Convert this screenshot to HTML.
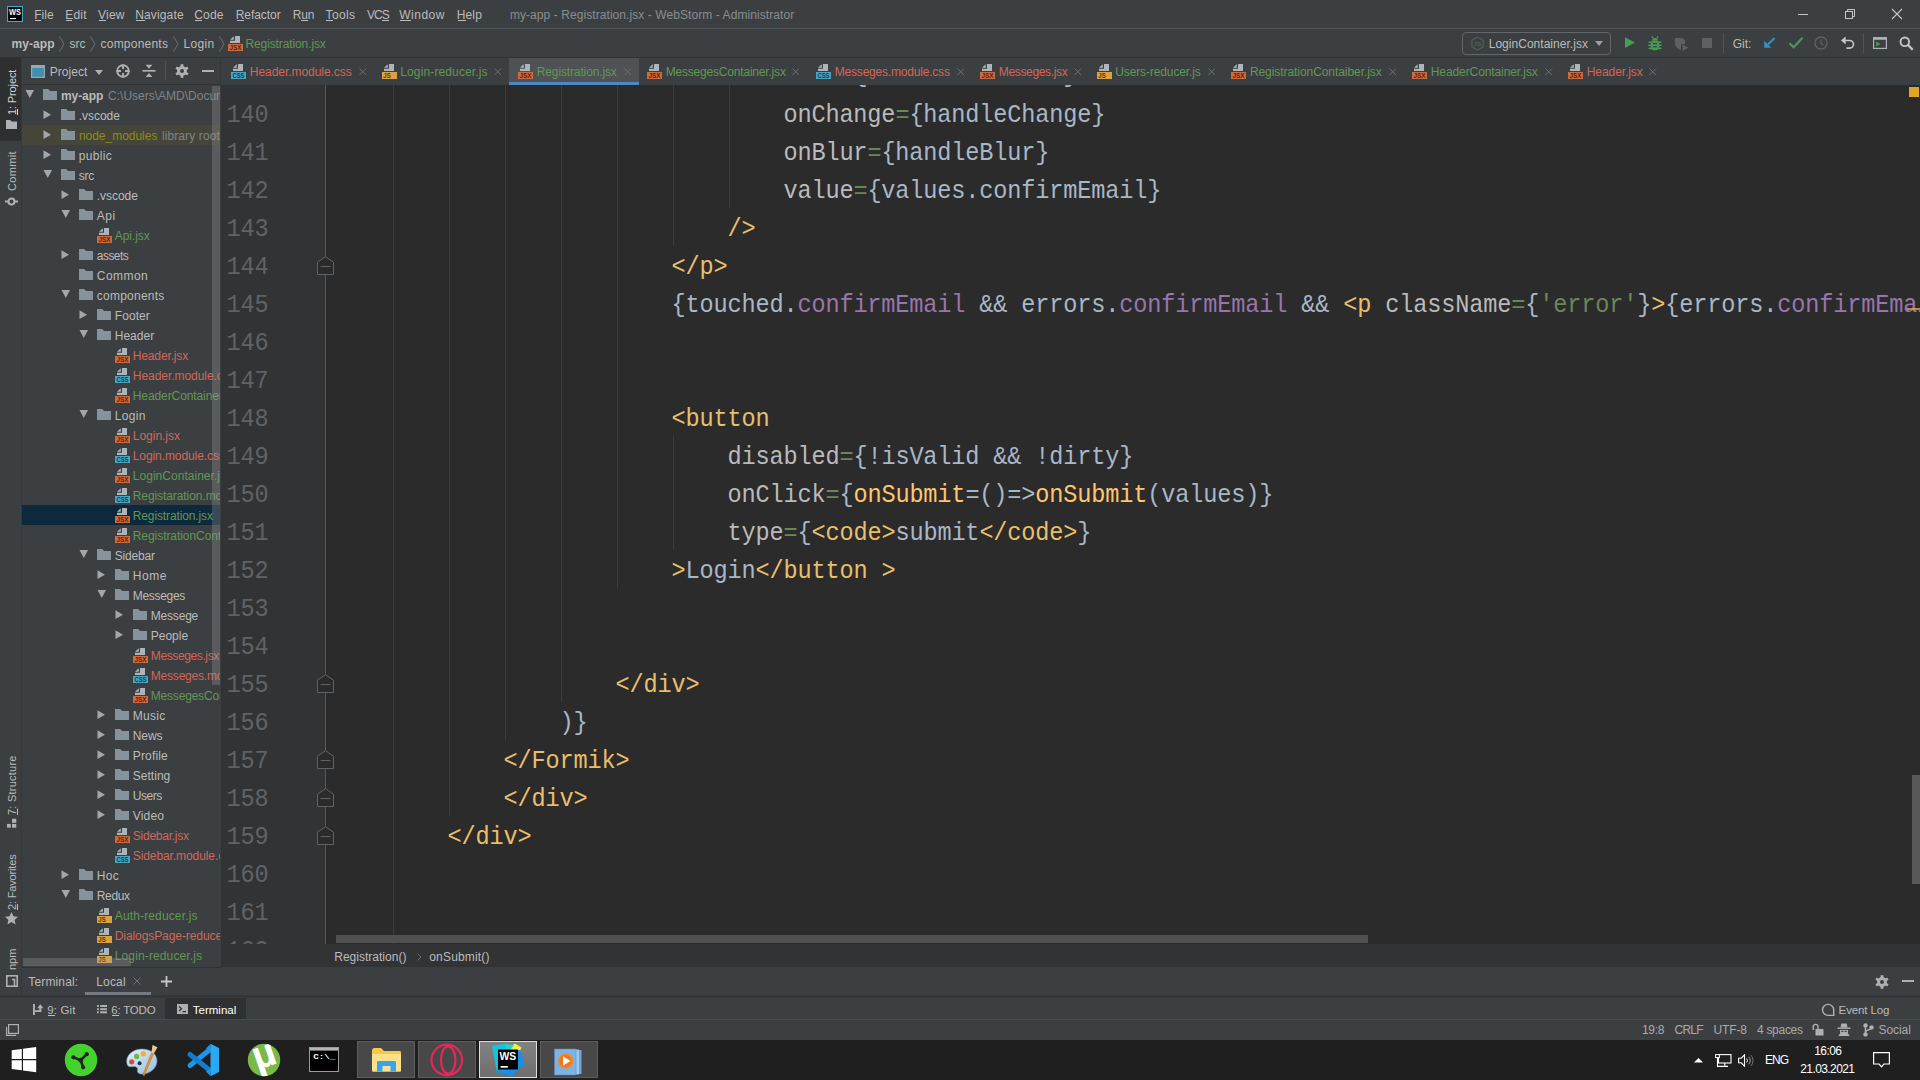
<!DOCTYPE html>
<html lang="en"><head><meta charset="utf-8"><title>my-app - Registration.jsx - WebStorm</title>
<style>
html,body{margin:0;padding:0;background:#2b2b2b;}
body{width:1920px;height:1080px;overflow:hidden;font-family:"Liberation Sans",sans-serif;font-size:12px;}
#root{position:relative;width:1920px;height:1080px;overflow:hidden;background:#3c3f41;}
#root>div,#root>svg,#root>span{position:absolute;}
.t{white-space:pre;line-height:1;display:block;}
.clip{position:absolute;overflow:hidden;}
.clip>div,.clip>svg,.clip>span{position:absolute;}
.ln{position:absolute;transform-origin:0 50%;left:0;height:38px;line-height:38px;white-space:pre;font-family:"Liberation Mono",monospace;color:#a9b7c6;}
.num{position:absolute;transform-origin:0 50%;font-family:"Liberation Mono",monospace;color:#606366;white-space:pre;line-height:38px;height:38px;}
.k{color:#e8bf6a}.a{color:#bababa}.g{color:#6a8759}.p{color:#9876aa}.f{color:#ffc66d}

</style></head>
<body>
<div id="root">
<div style="left:0px;top:0px;width:1920px;height:29px;background:#3c3f41;"></div>
<div style="left:0px;top:28px;width:1920px;height:1px;background:#515456;"></div>
<svg style="left:7px;top:6px;" width="16" height="16" viewBox="0 0 16 16"><rect width="16" height="16" fill="#45a9cc"/><rect x="1.100" y="1.100" width="13.800" height="13.800" fill="#000"/><text x="2.100" y="9" font-family="Liberation Sans, sans-serif" font-weight="700" font-size="8.400" fill="#fff" textLength="12" lengthAdjust="spacingAndGlyphs">WS</text><rect x="3" y="12" width="6" height="1.100" fill="#fff"/></svg>
<span class="t " style="left:34.28px;top:9.00px;color:#bbbbbb;letter-spacing:0.024px;">File</span>
<span class="t " style="left:65.28px;top:9.00px;color:#bbbbbb;letter-spacing:0.188px;">Edit</span>
<span class="t " style="left:98.03px;top:9.00px;color:#bbbbbb;letter-spacing:0.223px;">View</span>
<span class="t " style="left:135.28px;top:9.00px;color:#bbbbbb;letter-spacing:0.133px;">Navigate</span>
<span class="t " style="left:194.28px;top:9.00px;color:#bbbbbb;letter-spacing:0.188px;">Code</span>
<span class="t " style="left:235.68px;top:9.00px;color:#bbbbbb;letter-spacing:-0.040px;">Refactor</span>
<span class="t " style="left:292.68px;top:9.00px;color:#bbbbbb;letter-spacing:-0.075px;">Run</span>
<span class="t " style="left:325.53px;top:9.00px;color:#bbbbbb;letter-spacing:0.375px;">Tools</span>
<span class="t " style="left:366.88px;top:9.00px;color:#bbbbbb;letter-spacing:-0.849px;">VCS</span>
<span class="t " style="left:399.28px;top:9.00px;color:#bbbbbb;letter-spacing:0.492px;">Window</span>
<span class="t " style="left:456.78px;top:9.00px;color:#bbbbbb;letter-spacing:0.126px;">Help</span>
<div style="left:35px;top:20px;width:6px;height:1px;background:#bbbbbb;"></div>
<div style="left:66px;top:20px;width:6px;height:1px;background:#bbbbbb;"></div>
<div style="left:99px;top:20px;width:7px;height:1px;background:#bbbbbb;"></div>
<div style="left:136px;top:20px;width:9px;height:1px;background:#bbbbbb;"></div>
<div style="left:195px;top:20px;width:7px;height:1px;background:#bbbbbb;"></div>
<div style="left:236.5px;top:20px;width:7.5px;height:1px;background:#bbbbbb;"></div>
<div style="left:301px;top:20px;width:6.5px;height:1px;background:#bbbbbb;"></div>
<div style="left:326px;top:20px;width:7px;height:1px;background:#bbbbbb;"></div>
<div style="left:381.5px;top:20px;width:7.0px;height:1px;background:#bbbbbb;"></div>
<div style="left:400px;top:20px;width:11px;height:1px;background:#bbbbbb;"></div>
<div style="left:457.5px;top:20px;width:8.5px;height:1px;background:#bbbbbb;"></div>
<span class="t " style="left:509.88px;top:9.00px;color:#8a8d8f;letter-spacing:0.073px;">my-app - Registration.jsx - WebStorm - Administrator</span>
<div style="left:1798px;top:14px;width:10px;height:1px;background:#c4c6c7;"></div>
<svg style="left:1844px;top:8px;" width="12" height="12" viewBox="0 0 12 12"><path d="M3.5 3.5V1.5h7v7h-2" fill="none" stroke="#c4c6c7" stroke-width="1"/><rect x="1.5" y="3.5" width="7" height="7" fill="none" stroke="#c4c6c7" stroke-width="1"/></svg>
<svg style="left:1891px;top:8px;" width="12" height="12" viewBox="0 0 12 12"><path d="M1 1l10 10M11 1L1 11" stroke="#c4c6c7" stroke-width="1.1" fill="none"/></svg>
<div style="left:0px;top:29px;width:1920px;height:28px;background:#3c3f41;"></div>
<div style="left:0px;top:57px;width:1920px;height:1px;background:#323232;"></div>
<span class="t " style="left:11.48px;top:38.00px;font-weight:700;color:#bbbbbb;letter-spacing:0.092px;">my-app</span>
<span class="t " style="left:69.58px;top:38.00px;color:#bbbbbb;letter-spacing:-0.037px;">src</span>
<span class="t " style="left:100.53px;top:38.00px;color:#bbbbbb;letter-spacing:0.222px;">components</span>
<span class="t " style="left:183.58px;top:38.00px;color:#bbbbbb;letter-spacing:0.303px;">Login</span>
<svg style="left:58.5px;top:36px;" width="6" height="16" viewBox="0 0 6 16"><path d="M0.5 0.5L5 8 0.5 15.5" fill="none" stroke="#6b6e70" stroke-width="1"/></svg>
<svg style="left:90px;top:36px;" width="6" height="16" viewBox="0 0 6 16"><path d="M0.5 0.5L5 8 0.5 15.5" fill="none" stroke="#6b6e70" stroke-width="1"/></svg>
<svg style="left:172.5px;top:36px;" width="6" height="16" viewBox="0 0 6 16"><path d="M0.5 0.5L5 8 0.5 15.5" fill="none" stroke="#6b6e70" stroke-width="1"/></svg>
<svg style="left:218.5px;top:36px;" width="6" height="16" viewBox="0 0 6 16"><path d="M0.5 0.5L5 8 0.5 15.5" fill="none" stroke="#6b6e70" stroke-width="1"/></svg>
<svg style="left:228px;top:36px;" width="16" height="16" viewBox="0 0 16 16"><path d="M7 0H12V7H2V4.800H7z" fill="#adb4ba"/><path d="M5.800 0.200V3.800H2z" fill="#adb4ba"/><rect x="0" y="8" width="15" height="7" fill="#cb6b3e"/><text x="1.500" y="14" font-family="Liberation Sans, sans-serif" font-weight="700" font-size="6.600" fill="#5e2208" textLength="12" lengthAdjust="spacingAndGlyphs">JSX</text></svg>
<span class="t " style="left:245.48px;top:38.00px;color:#629755;letter-spacing:-0.112px;">Registration.jsx</span>
<div style="left:1462px;top:32px;width:147px;height:21px;border:1px solid #646769;border-radius:4px;background:#3c3f41"></div>
<svg style="left:1470px;top:36px;" width="15" height="15" viewBox="0 0 15 15"><path d="M7.5 1l5.6 3.2v6.6L7.5 14l-5.6-3.2V4.2z" fill="none" stroke="#5d7a5c" stroke-width="1.200" opacity=".55"/><text x="7.5" y="10" font-size="6" font-family="Liberation Sans, sans-serif" font-weight="700" text-anchor="middle" fill="#5d7a5c" opacity=".6">JS</text></svg>
<span class="t " style="left:1488.68px;top:38.00px;color:#bbbbbb;letter-spacing:0.031px;">LoginContainer.jsx</span>
<svg style="left:1595px;top:41px;" width="8" height="5" viewBox="0 0 8 5"><path d="M0 0h8L4 5z" fill="#9da0a2"/></svg>
<svg style="left:1625px;top:37px;" width="11" height="12" viewBox="0 0 11 12"><path d="M0 0.3L10 5.6 0 11z" fill="#499c54"/></svg>
<svg style="left:1648px;top:36px;" width="14" height="15" viewBox="0 0 14 15"><g fill="#499c54"><path d="M4.200 4.700a2.800 2.600 0 0 1 5.600 0z"/><rect x="2.800" y="5" width="8.400" height="9.300" rx="3.600"/><rect x="0.600" y="5.400" width="12.800" height="1.500"/><rect x="0.300" y="8.500" width="13.400" height="1.500"/><rect x="0.600" y="11.600" width="12.800" height="1.500"/></g><path d="M3.800 0.300L5.400 2.500M10.200 0.300L8.600 2.500" stroke="#499c54" stroke-width="1.200" fill="none"/><g fill="#3c3f41"><rect x="4.800" y="7.100" width="4.400" height="1.200"/><rect x="4.800" y="10.200" width="4.400" height="1.200"/></g></svg>
<svg style="left:1674px;top:37px;" width="15" height="14" viewBox="0 0 15 14"><path d="M1 1h7l3 2v4H7v5.5H5C2.5 11 1 9 1 6z" fill="#5e6163"/><path d="M8.5 7.5l6 3.2-6 3.3z" fill="#5e6163"/></svg>
<div style="left:1702px;top:38px;width:10px;height:10px;background:#5e6163;"></div>
<div style="left:1723px;top:33px;width:1px;height:20px;background:#515456;"></div>
<span class="t " style="left:1732.78px;top:38.00px;color:#bbbbbb;letter-spacing:-0.058px;">Git:</span>
<svg style="left:1763px;top:37px;" width="13" height="12" viewBox="0 0 13 12"><path d="M11.5 1L3 9.5" stroke="#3592c4" stroke-width="2" fill="none"/><path d="M1.2 3.8v7h7z" fill="#3592c4"/></svg>
<svg style="left:1788px;top:36px;" width="16" height="13" viewBox="0 0 16 13"><path d="M1.5 7.2l4.2 4L14.5 1.8" stroke="#499c54" stroke-width="2.2" fill="none"/></svg>
<svg style="left:1814px;top:36px;" width="14" height="14" viewBox="0 0 14 14"><circle cx="7" cy="7" r="6" fill="none" stroke="#5e6163" stroke-width="1.4"/><path d="M7 3.5V7.3l2.6 1.6" fill="none" stroke="#5e6163" stroke-width="1.3"/></svg>
<svg style="left:1841px;top:36px;" width="14" height="14" viewBox="0 0 14 14"><path d="M2.5 4.5h6.2a3.8 3.8 0 0 1 0 7.6H5.5" fill="none" stroke="#c4c6c7" stroke-width="1.6"/><path d="M0 4.5L4.6 0.6v7.8z" fill="#c4c6c7"/></svg>
<div style="left:1863px;top:33px;width:1px;height:20px;background:#515456;"></div>
<svg style="left:1873px;top:37px;" width="14" height="12" viewBox="0 0 14 12"><rect x="0.6" y="0.6" width="12.8" height="10.8" fill="none" stroke="#aeb1b3" stroke-width="1.2"/><rect x="0.6" y="0.6" width="12.8" height="2.2" fill="#aeb1b3"/><path d="M3.2 4.6l4.3 2.5-4.3 2.5z" fill="#499c54"/></svg>
<svg style="left:1899px;top:36px;" width="15" height="15" viewBox="0 0 15 15"><circle cx="5.8" cy="5.8" r="4.3" fill="none" stroke="#c4c6c7" stroke-width="1.9"/><path d="M8.9 8.9l4.8 4.8" stroke="#c4c6c7" stroke-width="2.3"/></svg>
<div style="left:0px;top:58px;width:22px;height:939px;background:#3c3f41;"></div>
<div style="left:21px;top:58px;width:1px;height:939px;background:#35383a;"></div>
<div style="left:0px;top:58px;width:21px;height:83px;background:#2d2f30;"></div>
<span class="t" style="left:7.30px;top:114.66px;font-size:11px;color:#d0d2d3;letter-spacing:-0.125px;transform-origin:0 0;transform:rotate(-90deg);"><u>1</u>: Project</span>
<svg style="left:6px;top:120px;" width="11" height="9" viewBox="0 0 11 9"><path d="M0 0h4.200l1.400 1.600H11V9H0z" fill="#aeb1b3"/></svg>
<span class="t" style="left:7.30px;top:190.66px;font-size:11px;color:#bbbbbb;letter-spacing:0.355px;transform-origin:0 0;transform:rotate(-90deg);">Commit</span>
<svg style="left:5px;top:196px;" width="13" height="11" viewBox="0 0 13 11"><circle cx="6.500" cy="5.500" r="3" fill="none" stroke="#aeb1b3" stroke-width="2.100"/><path d="M0 5.500h3.300M9.700 5.500h3.300" stroke="#aeb1b3" stroke-width="2.100"/></svg>
<span class="t" style="left:7.30px;top:815.06px;font-size:11px;color:#bbbbbb;letter-spacing:0.238px;transform-origin:0 0;transform:rotate(-90deg);"><u>7</u>: Structure</span>
<svg style="left:7px;top:818px;" width="10" height="10" viewBox="0 0 10 10"><rect x="5" y="0.700" width="4.300" height="4.100" fill="#aeb1b3"/><rect x="0" y="5.900" width="3.800" height="3.800" fill="#aeb1b3"/><rect x="5" y="5.900" width="4.300" height="3.800" fill="#aeb1b3"/></svg>
<span class="t" style="left:7.30px;top:909.56px;font-size:11px;color:#bbbbbb;letter-spacing:-0.162px;transform-origin:0 0;transform:rotate(-90deg);"><u>2</u>: Favorites</span>
<svg style="left:5px;top:912px;" width="13" height="13" viewBox="0 0 13 13"><path d="M6.500 0l2 4.300 4.500.5-3.400 3.100 1 4.600-4.100-2.400-4.100 2.400 1-4.600L0 4.800l4.500-.5z" fill="#aeb1b3"/></svg>
<span class="t" style="left:6.80px;top:970.06px;font-size:11px;color:#bbbbbb;letter-spacing:-0.029px;transform-origin:0 0;transform:rotate(-90deg);">npm</span>
<svg style="left:6px;top:975px;" width="12" height="12" viewBox="0 0 12 12"><rect x="0.800" y="0.800" width="10.400" height="10.400" fill="none" stroke="#aeb1b3" stroke-width="1.600"/><path d="M6 4.500h2.500V11" fill="none" stroke="#aeb1b3" stroke-width="1.600"/></svg>
<div style="left:22px;top:58px;width:199px;height:27px;background:#3c3f41;"></div>
<div style="left:22px;top:84px;width:199px;height:1px;background:#323232;"></div>
<svg style="left:31px;top:65px;" width="14" height="13" viewBox="0 0 14 13"><rect x="0.6" y="0.6" width="12.8" height="11.8" fill="#3e8fb0" stroke="#9aa7b0" stroke-width="1.2"/><rect x="0.6" y="0.6" width="12.8" height="2.4" fill="#9aa7b0"/></svg>
<span class="t " style="left:49.68px;top:66.00px;color:#bbbbbb;letter-spacing:0.040px;">Project</span>
<svg style="left:95px;top:70px;" width="8" height="5" viewBox="0 0 8 5"><path d="M0 0h8L4 5z" fill="#aeb1b3"/></svg>
<svg style="left:116px;top:64px;" width="14" height="14" viewBox="0 0 14 14"><circle cx="7" cy="7" r="5.800" fill="none" stroke="#aeb1b3" stroke-width="1.900"/><path d="M7 0.500v4.500M7 9v4.500M0.500 7h4.500M9 7h4.500" stroke="#aeb1b3" stroke-width="1.900"/></svg>
<svg style="left:142px;top:64px;" width="14" height="14" viewBox="0 0 14 14"><path d="M0.500 6.800h13" stroke="#aeb1b3" stroke-width="1.700"/><path d="M3.600 0.800h6.800L7 4.800zM3.600 13h6.800L7 9z" fill="#aeb1b3"/></svg>
<div style="left:165px;top:61px;width:1px;height:19px;background:#515456;"></div>
<svg style="left:175px;top:64px;" width="14" height="14" viewBox="0 0 14 14"><g fill="#aeb1b3"><circle cx="7" cy="7" r="4.9"/><rect x="5.6" y="0.2" width="2.8" height="3" transform="rotate(0 7 7)"/><rect x="5.6" y="0.2" width="2.8" height="3" transform="rotate(60 7 7)"/><rect x="5.6" y="0.2" width="2.8" height="3" transform="rotate(120 7 7)"/><rect x="5.6" y="0.2" width="2.8" height="3" transform="rotate(180 7 7)"/><rect x="5.6" y="0.2" width="2.8" height="3" transform="rotate(240 7 7)"/><rect x="5.6" y="0.2" width="2.8" height="3" transform="rotate(300 7 7)"/></g><circle cx="7" cy="7" r="2" fill="#3c3f41"/></svg>
<div style="left:202px;top:70px;width:12px;height:2px;background:#aeb1b3;"></div>
<div style="left:220px;top:58px;width:1px;height:27px;background:#35383a;"></div>
<div style="left:221px;top:58px;width:1699px;height:27px;background:#3c3f41;"></div>
<div style="left:509px;top:58px;width:130px;height:27px;background:#4e5254;"></div>
<div style="left:509px;top:82px;width:130px;height:3px;background:#4a88c7;"></div>
<svg style="left:231px;top:64px;" width="16" height="16" viewBox="0 0 16 16"><path d="M7 0H12V7H2V4.800H7z" fill="#adb4ba"/><path d="M5.800 0.200V3.800H2z" fill="#adb4ba"/><rect x="0" y="8" width="15" height="7" fill="#4aa4c0"/><text x="1.500" y="14" font-family="Liberation Sans, sans-serif" font-weight="700" font-size="6.600" fill="#123e50" textLength="12" lengthAdjust="spacingAndGlyphs">CSS</text></svg>
<span class="t " style="left:249.78px;top:66.00px;color:#d1675a;letter-spacing:-0.047px;">Header.module.css</span>
<svg style="left:359px;top:67.5px;" width="8" height="8" viewBox="0 0 8 8"><path d="M0.500 0.500l6.500 6.500M7 0.500l-6.500 6.500" stroke="#6c6f71" stroke-width="1" fill="none"/></svg>
<svg style="left:382px;top:64px;" width="16" height="16" viewBox="0 0 16 16"><path d="M7 0H12V7H2V4.800H7z" fill="#adb4ba"/><path d="M5.800 0.200V3.800H2z" fill="#adb4ba"/><rect x="0" y="8" width="15" height="7" fill="#d9a343"/><text x="1.300" y="14" font-family="Liberation Sans, sans-serif" font-weight="700" font-size="6.600" fill="#553608" textLength="7.400" lengthAdjust="spacingAndGlyphs">JS</text></svg>
<span class="t " style="left:400.28px;top:66.00px;color:#629755;letter-spacing:0.128px;">Login-reducer.js</span>
<svg style="left:494px;top:67.5px;" width="8" height="8" viewBox="0 0 8 8"><path d="M0.500 0.500l6.500 6.500M7 0.500l-6.500 6.500" stroke="#6c6f71" stroke-width="1" fill="none"/></svg>
<svg style="left:518px;top:64px;" width="16" height="16" viewBox="0 0 16 16"><path d="M7 0H12V7H2V4.800H7z" fill="#adb4ba"/><path d="M5.800 0.200V3.800H2z" fill="#adb4ba"/><rect x="0" y="8" width="15" height="7" fill="#cb6b3e"/><text x="1.500" y="14" font-family="Liberation Sans, sans-serif" font-weight="700" font-size="6.600" fill="#5e2208" textLength="12" lengthAdjust="spacingAndGlyphs">JSX</text></svg>
<span class="t " style="left:536.78px;top:66.00px;color:#629755;letter-spacing:-0.131px;">Registration.jsx</span>
<svg style="left:624px;top:67.5px;" width="8" height="8" viewBox="0 0 8 8"><path d="M0.500 0.500l6.500 6.500M7 0.500l-6.500 6.500" stroke="#6c6f71" stroke-width="1" fill="none"/></svg>
<svg style="left:647px;top:64px;" width="16" height="16" viewBox="0 0 16 16"><path d="M7 0H12V7H2V4.800H7z" fill="#adb4ba"/><path d="M5.800 0.200V3.800H2z" fill="#adb4ba"/><rect x="0" y="8" width="15" height="7" fill="#cb6b3e"/><text x="1.500" y="14" font-family="Liberation Sans, sans-serif" font-weight="700" font-size="6.600" fill="#5e2208" textLength="12" lengthAdjust="spacingAndGlyphs">JSX</text></svg>
<span class="t " style="left:665.68px;top:66.00px;color:#629755;letter-spacing:-0.192px;">MessegesContainer.jsx</span>
<svg style="left:792px;top:67.5px;" width="8" height="8" viewBox="0 0 8 8"><path d="M0.500 0.500l6.500 6.500M7 0.500l-6.500 6.500" stroke="#6c6f71" stroke-width="1" fill="none"/></svg>
<svg style="left:816px;top:64px;" width="16" height="16" viewBox="0 0 16 16"><path d="M7 0H12V7H2V4.800H7z" fill="#adb4ba"/><path d="M5.800 0.200V3.800H2z" fill="#adb4ba"/><rect x="0" y="8" width="15" height="7" fill="#4aa4c0"/><text x="1.500" y="14" font-family="Liberation Sans, sans-serif" font-weight="700" font-size="6.600" fill="#123e50" textLength="12" lengthAdjust="spacingAndGlyphs">CSS</text></svg>
<span class="t " style="left:834.78px;top:66.00px;color:#d1675a;letter-spacing:-0.199px;">Messeges.module.css</span>
<svg style="left:956.5px;top:67.5px;" width="8" height="8" viewBox="0 0 8 8"><path d="M0.500 0.500l6.500 6.500M7 0.500l-6.500 6.500" stroke="#6c6f71" stroke-width="1" fill="none"/></svg>
<svg style="left:980px;top:64px;" width="16" height="16" viewBox="0 0 16 16"><path d="M7 0H12V7H2V4.800H7z" fill="#adb4ba"/><path d="M5.800 0.200V3.800H2z" fill="#adb4ba"/><rect x="0" y="8" width="15" height="7" fill="#cb6b3e"/><text x="1.500" y="14" font-family="Liberation Sans, sans-serif" font-weight="700" font-size="6.600" fill="#5e2208" textLength="12" lengthAdjust="spacingAndGlyphs">JSX</text></svg>
<span class="t " style="left:998.78px;top:66.00px;color:#d1675a;letter-spacing:-0.339px;">Messeges.jsx</span>
<svg style="left:1073.5px;top:67.5px;" width="8" height="8" viewBox="0 0 8 8"><path d="M0.500 0.500l6.500 6.500M7 0.500l-6.500 6.500" stroke="#6c6f71" stroke-width="1" fill="none"/></svg>
<svg style="left:1097px;top:64px;" width="16" height="16" viewBox="0 0 16 16"><path d="M7 0H12V7H2V4.800H7z" fill="#adb4ba"/><path d="M5.800 0.200V3.800H2z" fill="#adb4ba"/><rect x="0" y="8" width="15" height="7" fill="#d9a343"/><text x="1.300" y="14" font-family="Liberation Sans, sans-serif" font-weight="700" font-size="6.600" fill="#553608" textLength="7.400" lengthAdjust="spacingAndGlyphs">JS</text></svg>
<span class="t " style="left:1115.28px;top:66.00px;color:#629755;letter-spacing:-0.120px;">Users-reducer.js</span>
<svg style="left:1207.6px;top:67.5px;" width="8" height="8" viewBox="0 0 8 8"><path d="M0.500 0.500l6.500 6.500M7 0.500l-6.500 6.500" stroke="#6c6f71" stroke-width="1" fill="none"/></svg>
<svg style="left:1231px;top:64px;" width="16" height="16" viewBox="0 0 16 16"><path d="M7 0H12V7H2V4.800H7z" fill="#adb4ba"/><path d="M5.800 0.200V3.800H2z" fill="#adb4ba"/><rect x="0" y="8" width="15" height="7" fill="#cb6b3e"/><text x="1.500" y="14" font-family="Liberation Sans, sans-serif" font-weight="700" font-size="6.600" fill="#5e2208" textLength="12" lengthAdjust="spacingAndGlyphs">JSX</text></svg>
<span class="t " style="left:1249.88px;top:66.00px;color:#629755;letter-spacing:-0.063px;">RegistrationContaiber.jsx</span>
<svg style="left:1388.5px;top:67.5px;" width="8" height="8" viewBox="0 0 8 8"><path d="M0.500 0.500l6.500 6.500M7 0.500l-6.500 6.500" stroke="#6c6f71" stroke-width="1" fill="none"/></svg>
<svg style="left:1412px;top:64px;" width="16" height="16" viewBox="0 0 16 16"><path d="M7 0H12V7H2V4.800H7z" fill="#adb4ba"/><path d="M5.800 0.200V3.800H2z" fill="#adb4ba"/><rect x="0" y="8" width="15" height="7" fill="#cb6b3e"/><text x="1.500" y="14" font-family="Liberation Sans, sans-serif" font-weight="700" font-size="6.600" fill="#5e2208" textLength="12" lengthAdjust="spacingAndGlyphs">JSX</text></svg>
<span class="t " style="left:1430.78px;top:66.00px;color:#629755;letter-spacing:-0.094px;">HeaderContainer.jsx</span>
<svg style="left:1544.5px;top:67.5px;" width="8" height="8" viewBox="0 0 8 8"><path d="M0.500 0.500l6.500 6.500M7 0.500l-6.500 6.500" stroke="#6c6f71" stroke-width="1" fill="none"/></svg>
<svg style="left:1568px;top:64px;" width="16" height="16" viewBox="0 0 16 16"><path d="M7 0H12V7H2V4.800H7z" fill="#adb4ba"/><path d="M5.800 0.200V3.800H2z" fill="#adb4ba"/><rect x="0" y="8" width="15" height="7" fill="#cb6b3e"/><text x="1.500" y="14" font-family="Liberation Sans, sans-serif" font-weight="700" font-size="6.600" fill="#5e2208" textLength="12" lengthAdjust="spacingAndGlyphs">JSX</text></svg>
<span class="t " style="left:1586.78px;top:66.00px;color:#d1675a;letter-spacing:-0.076px;">Header.jsx</span>
<svg style="left:1648.5px;top:67.5px;" width="8" height="8" viewBox="0 0 8 8"><path d="M0.500 0.500l6.500 6.500M7 0.500l-6.500 6.500" stroke="#6c6f71" stroke-width="1" fill="none"/></svg>
<div style="left:22px;top:85px;width:199px;height:883px;background:#3c3f41;"></div>
<div class="clip" style="left:0;top:0;width:1920px;height:1080px;clip-path:inset(85px 1700px 113px 22px);">
<div style="left:22px;top:125px;width:199px;height:20px;background:#46453a;"></div>
<div style="left:22px;top:505px;width:199px;height:20px;background:#0d293e;"></div>
<svg style="left:25px;top:90px;" width="10" height="9" viewBox="0 0 10 9"><path d="M0.500 0h8.500L4.750 8z" fill="#a4a7a9"/></svg>
<svg style="left:43px;top:89px;" width="14" height="11" viewBox="0 0 14 11"><path d="M0 0h5.2l1.8 2H14v9H0z" fill="#87939a"/></svg>
<span class="t " style="left:60.88px;top:90.00px;font-weight:700;color:#bbbbbb;letter-spacing:-0.041px;">my-app</span>
<span class="t " style="left:108.08px;top:90.00px;color:#808385;letter-spacing:0.000px;">C:\Users\AMD\Documents</span>
<svg style="left:43px;top:110px;" width="9" height="10" viewBox="0 0 9 10"><path d="M0.500 0.300v8.700L8 4.650z" fill="#a4a7a9"/></svg>
<svg style="left:61px;top:109px;" width="14" height="11" viewBox="0 0 14 11"><path d="M0 0h5.2l1.8 2H14v9H0z" fill="#87939a"/></svg>
<span class="t " style="left:78.78px;top:110.00px;color:#bbbbbb;letter-spacing:-0.046px;">.vscode</span>
<svg style="left:43px;top:130px;" width="9" height="10" viewBox="0 0 9 10"><path d="M0.500 0.300v8.700L8 4.650z" fill="#a4a7a9"/></svg>
<svg style="left:61px;top:129px;" width="14" height="11" viewBox="0 0 14 11"><path d="M0 0h5.2l1.8 2H14v9H0z" fill="#87939a"/></svg>
<span class="t " style="left:78.88px;top:130.00px;color:#8c8c1a;letter-spacing:-0.016px;">node_modules</span>
<span class="t " style="left:161.88px;top:130.00px;color:#808385;letter-spacing:0.113px;">library root</span>
<svg style="left:43px;top:150px;" width="9" height="10" viewBox="0 0 9 10"><path d="M0.500 0.300v8.700L8 4.650z" fill="#a4a7a9"/></svg>
<svg style="left:61px;top:149px;" width="14" height="11" viewBox="0 0 14 11"><path d="M0 0h5.2l1.8 2H14v9H0z" fill="#87939a"/></svg>
<span class="t " style="left:78.78px;top:150.00px;color:#bbbbbb;letter-spacing:0.347px;">public</span>
<svg style="left:43px;top:170px;" width="10" height="9" viewBox="0 0 10 9"><path d="M0.500 0h8.500L4.750 8z" fill="#a4a7a9"/></svg>
<svg style="left:61px;top:169px;" width="14" height="11" viewBox="0 0 14 11"><path d="M0 0h5.2l1.8 2H14v9H0z" fill="#87939a"/></svg>
<span class="t " style="left:78.78px;top:170.00px;color:#bbbbbb;letter-spacing:-0.220px;">src</span>
<svg style="left:61px;top:190px;" width="9" height="10" viewBox="0 0 9 10"><path d="M0.500 0.300v8.700L8 4.650z" fill="#a4a7a9"/></svg>
<svg style="left:79px;top:189px;" width="14" height="11" viewBox="0 0 14 11"><path d="M0 0h5.2l1.8 2H14v9H0z" fill="#87939a"/></svg>
<span class="t " style="left:96.78px;top:190.00px;color:#bbbbbb;letter-spacing:-0.046px;">.vscode</span>
<svg style="left:61px;top:210px;" width="10" height="9" viewBox="0 0 10 9"><path d="M0.500 0h8.500L4.750 8z" fill="#a4a7a9"/></svg>
<svg style="left:79px;top:209px;" width="14" height="11" viewBox="0 0 14 11"><path d="M0 0h5.2l1.8 2H14v9H0z" fill="#87939a"/></svg>
<span class="t " style="left:96.78px;top:210.00px;color:#bbbbbb;letter-spacing:0.499px;">Api</span>
<svg style="left:97px;top:228px;" width="16" height="16" viewBox="0 0 16 16"><path d="M7 0H12V7H2V4.800H7z" fill="#adb4ba"/><path d="M5.800 0.200V3.800H2z" fill="#adb4ba"/><rect x="0" y="8" width="15" height="7" fill="#cb6b3e"/><text x="1.500" y="14" font-family="Liberation Sans, sans-serif" font-weight="700" font-size="6.600" fill="#5e2208" textLength="12" lengthAdjust="spacingAndGlyphs">JSX</text></svg>
<span class="t " style="left:114.78px;top:230.00px;color:#629755;letter-spacing:-0.072px;">Api.jsx</span>
<svg style="left:61px;top:250px;" width="9" height="10" viewBox="0 0 9 10"><path d="M0.500 0.300v8.700L8 4.650z" fill="#a4a7a9"/></svg>
<svg style="left:79px;top:249px;" width="14" height="11" viewBox="0 0 14 11"><path d="M0 0h5.2l1.8 2H14v9H0z" fill="#87939a"/></svg>
<span class="t " style="left:96.78px;top:250.00px;color:#bbbbbb;letter-spacing:-0.525px;">assets</span>
<svg style="left:79px;top:269px;" width="14" height="11" viewBox="0 0 14 11"><path d="M0 0h5.2l1.8 2H14v9H0z" fill="#87939a"/></svg>
<span class="t " style="left:96.78px;top:270.00px;color:#bbbbbb;letter-spacing:0.459px;">Common</span>
<svg style="left:61px;top:290px;" width="10" height="9" viewBox="0 0 10 9"><path d="M0.500 0h8.500L4.750 8z" fill="#a4a7a9"/></svg>
<svg style="left:79px;top:289px;" width="14" height="11" viewBox="0 0 14 11"><path d="M0 0h5.2l1.8 2H14v9H0z" fill="#87939a"/></svg>
<span class="t " style="left:96.78px;top:290.00px;color:#bbbbbb;letter-spacing:0.237px;">components</span>
<svg style="left:79px;top:310px;" width="9" height="10" viewBox="0 0 9 10"><path d="M0.500 0.300v8.700L8 4.650z" fill="#a4a7a9"/></svg>
<svg style="left:97px;top:309px;" width="14" height="11" viewBox="0 0 14 11"><path d="M0 0h5.2l1.8 2H14v9H0z" fill="#87939a"/></svg>
<span class="t " style="left:114.78px;top:310.00px;color:#bbbbbb;letter-spacing:0.075px;">Footer</span>
<svg style="left:79px;top:330px;" width="10" height="9" viewBox="0 0 10 9"><path d="M0.500 0h8.500L4.750 8z" fill="#a4a7a9"/></svg>
<svg style="left:97px;top:329px;" width="14" height="11" viewBox="0 0 14 11"><path d="M0 0h5.2l1.8 2H14v9H0z" fill="#87939a"/></svg>
<span class="t " style="left:114.78px;top:330.00px;color:#bbbbbb;letter-spacing:0.005px;">Header</span>
<svg style="left:115px;top:348px;" width="16" height="16" viewBox="0 0 16 16"><path d="M7 0H12V7H2V4.800H7z" fill="#adb4ba"/><path d="M5.800 0.200V3.800H2z" fill="#adb4ba"/><rect x="0" y="8" width="15" height="7" fill="#cb6b3e"/><text x="1.500" y="14" font-family="Liberation Sans, sans-serif" font-weight="700" font-size="6.600" fill="#5e2208" textLength="12" lengthAdjust="spacingAndGlyphs">JSX</text></svg>
<span class="t " style="left:132.78px;top:350.00px;color:#d1675a;letter-spacing:-0.136px;">Header.jsx</span>
<svg style="left:115px;top:368px;" width="16" height="16" viewBox="0 0 16 16"><path d="M7 0H12V7H2V4.800H7z" fill="#adb4ba"/><path d="M5.800 0.200V3.800H2z" fill="#adb4ba"/><rect x="0" y="8" width="15" height="7" fill="#4aa4c0"/><text x="1.500" y="14" font-family="Liberation Sans, sans-serif" font-weight="700" font-size="6.600" fill="#123e50" textLength="12" lengthAdjust="spacingAndGlyphs">CSS</text></svg>
<span class="t " style="left:132.78px;top:370.00px;color:#d1675a;letter-spacing:-0.047px;">Header.module.css</span>
<svg style="left:115px;top:388px;" width="16" height="16" viewBox="0 0 16 16"><path d="M7 0H12V7H2V4.800H7z" fill="#adb4ba"/><path d="M5.800 0.200V3.800H2z" fill="#adb4ba"/><rect x="0" y="8" width="15" height="7" fill="#cb6b3e"/><text x="1.500" y="14" font-family="Liberation Sans, sans-serif" font-weight="700" font-size="6.600" fill="#5e2208" textLength="12" lengthAdjust="spacingAndGlyphs">JSX</text></svg>
<span class="t " style="left:132.78px;top:390.00px;color:#629755;letter-spacing:-0.094px;">HeaderContainer.jsx</span>
<svg style="left:79px;top:410px;" width="10" height="9" viewBox="0 0 10 9"><path d="M0.500 0h8.500L4.750 8z" fill="#a4a7a9"/></svg>
<svg style="left:97px;top:409px;" width="14" height="11" viewBox="0 0 14 11"><path d="M0 0h5.2l1.8 2H14v9H0z" fill="#87939a"/></svg>
<span class="t " style="left:114.78px;top:410.00px;color:#bbbbbb;letter-spacing:0.333px;">Login</span>
<svg style="left:115px;top:428px;" width="16" height="16" viewBox="0 0 16 16"><path d="M7 0H12V7H2V4.800H7z" fill="#adb4ba"/><path d="M5.800 0.200V3.800H2z" fill="#adb4ba"/><rect x="0" y="8" width="15" height="7" fill="#cb6b3e"/><text x="1.500" y="14" font-family="Liberation Sans, sans-serif" font-weight="700" font-size="6.600" fill="#5e2208" textLength="12" lengthAdjust="spacingAndGlyphs">JSX</text></svg>
<span class="t " style="left:132.78px;top:430.00px;color:#d1675a;letter-spacing:-0.015px;">Login.jsx</span>
<svg style="left:115px;top:448px;" width="16" height="16" viewBox="0 0 16 16"><path d="M7 0H12V7H2V4.800H7z" fill="#adb4ba"/><path d="M5.800 0.200V3.800H2z" fill="#adb4ba"/><rect x="0" y="8" width="15" height="7" fill="#4aa4c0"/><text x="1.500" y="14" font-family="Liberation Sans, sans-serif" font-weight="700" font-size="6.600" fill="#123e50" textLength="12" lengthAdjust="spacingAndGlyphs">CSS</text></svg>
<span class="t " style="left:132.78px;top:450.00px;color:#d1675a;letter-spacing:-0.088px;">Login.module.css</span>
<svg style="left:115px;top:468px;" width="16" height="16" viewBox="0 0 16 16"><path d="M7 0H12V7H2V4.800H7z" fill="#adb4ba"/><path d="M5.800 0.200V3.800H2z" fill="#adb4ba"/><rect x="0" y="8" width="15" height="7" fill="#cb6b3e"/><text x="1.500" y="14" font-family="Liberation Sans, sans-serif" font-weight="700" font-size="6.600" fill="#5e2208" textLength="12" lengthAdjust="spacingAndGlyphs">JSX</text></svg>
<span class="t " style="left:132.78px;top:470.00px;color:#629755;letter-spacing:0.031px;">LoginContainer.jsx</span>
<svg style="left:115px;top:488px;" width="16" height="16" viewBox="0 0 16 16"><path d="M7 0H12V7H2V4.800H7z" fill="#adb4ba"/><path d="M5.800 0.200V3.800H2z" fill="#adb4ba"/><rect x="0" y="8" width="15" height="7" fill="#4aa4c0"/><text x="1.500" y="14" font-family="Liberation Sans, sans-serif" font-weight="700" font-size="6.600" fill="#123e50" textLength="12" lengthAdjust="spacingAndGlyphs">CSS</text></svg>
<span class="t " style="left:132.78px;top:490.00px;color:#629755;letter-spacing:-0.084px;">Registaration.module.css</span>
<svg style="left:115px;top:508px;" width="16" height="16" viewBox="0 0 16 16"><path d="M7 0H12V7H2V4.800H7z" fill="#adb4ba"/><path d="M5.800 0.200V3.800H2z" fill="#adb4ba"/><rect x="0" y="8" width="15" height="7" fill="#cb6b3e"/><text x="1.500" y="14" font-family="Liberation Sans, sans-serif" font-weight="700" font-size="6.600" fill="#5e2208" textLength="12" lengthAdjust="spacingAndGlyphs">JSX</text></svg>
<span class="t " style="left:132.78px;top:510.00px;color:#629755;letter-spacing:-0.124px;">Registration.jsx</span>
<svg style="left:115px;top:528px;" width="16" height="16" viewBox="0 0 16 16"><path d="M7 0H12V7H2V4.800H7z" fill="#adb4ba"/><path d="M5.800 0.200V3.800H2z" fill="#adb4ba"/><rect x="0" y="8" width="15" height="7" fill="#cb6b3e"/><text x="1.500" y="14" font-family="Liberation Sans, sans-serif" font-weight="700" font-size="6.600" fill="#5e2208" textLength="12" lengthAdjust="spacingAndGlyphs">JSX</text></svg>
<span class="t " style="left:132.78px;top:530.00px;color:#629755;letter-spacing:-0.059px;">RegistrationContaiber.jsx</span>
<svg style="left:79px;top:550px;" width="10" height="9" viewBox="0 0 10 9"><path d="M0.500 0h8.500L4.750 8z" fill="#a4a7a9"/></svg>
<svg style="left:97px;top:549px;" width="14" height="11" viewBox="0 0 14 11"><path d="M0 0h5.2l1.8 2H14v9H0z" fill="#87939a"/></svg>
<span class="t " style="left:114.78px;top:550.00px;color:#bbbbbb;letter-spacing:-0.176px;">Sidebar</span>
<svg style="left:97px;top:570px;" width="9" height="10" viewBox="0 0 9 10"><path d="M0.500 0.300v8.700L8 4.650z" fill="#a4a7a9"/></svg>
<svg style="left:115px;top:569px;" width="14" height="11" viewBox="0 0 14 11"><path d="M0 0h5.2l1.8 2H14v9H0z" fill="#87939a"/></svg>
<span class="t " style="left:132.78px;top:570.00px;color:#bbbbbb;letter-spacing:0.556px;">Home</span>
<svg style="left:97px;top:590px;" width="10" height="9" viewBox="0 0 10 9"><path d="M0.500 0h8.500L4.750 8z" fill="#a4a7a9"/></svg>
<svg style="left:115px;top:589px;" width="14" height="11" viewBox="0 0 14 11"><path d="M0 0h5.2l1.8 2H14v9H0z" fill="#87939a"/></svg>
<span class="t " style="left:132.78px;top:590.00px;color:#bbbbbb;letter-spacing:-0.308px;">Messeges</span>
<svg style="left:115px;top:610px;" width="9" height="10" viewBox="0 0 9 10"><path d="M0.500 0.300v8.700L8 4.650z" fill="#a4a7a9"/></svg>
<svg style="left:133px;top:609px;" width="14" height="11" viewBox="0 0 14 11"><path d="M0 0h5.2l1.8 2H14v9H0z" fill="#87939a"/></svg>
<span class="t " style="left:150.78px;top:610.00px;color:#bbbbbb;letter-spacing:-0.195px;">Messege</span>
<svg style="left:115px;top:630px;" width="9" height="10" viewBox="0 0 9 10"><path d="M0.500 0.300v8.700L8 4.650z" fill="#a4a7a9"/></svg>
<svg style="left:133px;top:629px;" width="14" height="11" viewBox="0 0 14 11"><path d="M0 0h5.2l1.8 2H14v9H0z" fill="#87939a"/></svg>
<span class="t " style="left:150.78px;top:630.00px;color:#bbbbbb;letter-spacing:-0.006px;">People</span>
<svg style="left:133px;top:648px;" width="16" height="16" viewBox="0 0 16 16"><path d="M7 0H12V7H2V4.800H7z" fill="#adb4ba"/><path d="M5.800 0.200V3.800H2z" fill="#adb4ba"/><rect x="0" y="8" width="15" height="7" fill="#cb6b3e"/><text x="1.500" y="14" font-family="Liberation Sans, sans-serif" font-weight="700" font-size="6.600" fill="#5e2208" textLength="12" lengthAdjust="spacingAndGlyphs">JSX</text></svg>
<span class="t " style="left:150.78px;top:650.00px;color:#d1675a;letter-spacing:-0.380px;">Messeges.jsx</span>
<svg style="left:133px;top:668px;" width="16" height="16" viewBox="0 0 16 16"><path d="M7 0H12V7H2V4.800H7z" fill="#adb4ba"/><path d="M5.800 0.200V3.800H2z" fill="#adb4ba"/><rect x="0" y="8" width="15" height="7" fill="#4aa4c0"/><text x="1.500" y="14" font-family="Liberation Sans, sans-serif" font-weight="700" font-size="6.600" fill="#123e50" textLength="12" lengthAdjust="spacingAndGlyphs">CSS</text></svg>
<span class="t " style="left:150.78px;top:670.00px;color:#d1675a;letter-spacing:-0.199px;">Messeges.module.css</span>
<svg style="left:133px;top:688px;" width="16" height="16" viewBox="0 0 16 16"><path d="M7 0H12V7H2V4.800H7z" fill="#adb4ba"/><path d="M5.800 0.200V3.800H2z" fill="#adb4ba"/><rect x="0" y="8" width="15" height="7" fill="#cb6b3e"/><text x="1.500" y="14" font-family="Liberation Sans, sans-serif" font-weight="700" font-size="6.600" fill="#5e2208" textLength="12" lengthAdjust="spacingAndGlyphs">JSX</text></svg>
<span class="t " style="left:150.78px;top:690.00px;color:#629755;letter-spacing:-0.192px;">MessegesContainer.jsx</span>
<svg style="left:97px;top:710px;" width="9" height="10" viewBox="0 0 9 10"><path d="M0.500 0.300v8.700L8 4.650z" fill="#a4a7a9"/></svg>
<svg style="left:115px;top:709px;" width="14" height="11" viewBox="0 0 14 11"><path d="M0 0h5.2l1.8 2H14v9H0z" fill="#87939a"/></svg>
<span class="t " style="left:132.78px;top:710.00px;color:#bbbbbb;letter-spacing:0.299px;">Music</span>
<svg style="left:97px;top:730px;" width="9" height="10" viewBox="0 0 9 10"><path d="M0.500 0.300v8.700L8 4.650z" fill="#a4a7a9"/></svg>
<svg style="left:115px;top:729px;" width="14" height="11" viewBox="0 0 14 11"><path d="M0 0h5.2l1.8 2H14v9H0z" fill="#87939a"/></svg>
<span class="t " style="left:132.78px;top:730.00px;color:#bbbbbb;letter-spacing:-0.094px;">News</span>
<svg style="left:97px;top:750px;" width="9" height="10" viewBox="0 0 9 10"><path d="M0.500 0.300v8.700L8 4.650z" fill="#a4a7a9"/></svg>
<svg style="left:115px;top:749px;" width="14" height="11" viewBox="0 0 14 11"><path d="M0 0h5.2l1.8 2H14v9H0z" fill="#87939a"/></svg>
<span class="t " style="left:132.78px;top:750.00px;color:#bbbbbb;letter-spacing:0.161px;">Profile</span>
<svg style="left:97px;top:770px;" width="9" height="10" viewBox="0 0 9 10"><path d="M0.500 0.300v8.700L8 4.650z" fill="#a4a7a9"/></svg>
<svg style="left:115px;top:769px;" width="14" height="11" viewBox="0 0 14 11"><path d="M0 0h5.2l1.8 2H14v9H0z" fill="#87939a"/></svg>
<span class="t " style="left:132.78px;top:770.00px;color:#bbbbbb;letter-spacing:0.026px;">Setting</span>
<svg style="left:97px;top:790px;" width="9" height="10" viewBox="0 0 9 10"><path d="M0.500 0.300v8.700L8 4.650z" fill="#a4a7a9"/></svg>
<svg style="left:115px;top:789px;" width="14" height="11" viewBox="0 0 14 11"><path d="M0 0h5.2l1.8 2H14v9H0z" fill="#87939a"/></svg>
<span class="t " style="left:132.78px;top:790.00px;color:#bbbbbb;letter-spacing:-0.481px;">Users</span>
<svg style="left:97px;top:810px;" width="9" height="10" viewBox="0 0 9 10"><path d="M0.500 0.300v8.700L8 4.650z" fill="#a4a7a9"/></svg>
<svg style="left:115px;top:809px;" width="14" height="11" viewBox="0 0 14 11"><path d="M0 0h5.2l1.8 2H14v9H0z" fill="#87939a"/></svg>
<span class="t " style="left:132.78px;top:810.00px;color:#bbbbbb;letter-spacing:0.171px;">Video</span>
<svg style="left:115px;top:828px;" width="16" height="16" viewBox="0 0 16 16"><path d="M7 0H12V7H2V4.800H7z" fill="#adb4ba"/><path d="M5.800 0.200V3.800H2z" fill="#adb4ba"/><rect x="0" y="8" width="15" height="7" fill="#cb6b3e"/><text x="1.500" y="14" font-family="Liberation Sans, sans-serif" font-weight="700" font-size="6.600" fill="#5e2208" textLength="12" lengthAdjust="spacingAndGlyphs">JSX</text></svg>
<span class="t " style="left:132.78px;top:830.00px;color:#d1675a;letter-spacing:-0.242px;">Sidebar.jsx</span>
<svg style="left:115px;top:848px;" width="16" height="16" viewBox="0 0 16 16"><path d="M7 0H12V7H2V4.800H7z" fill="#adb4ba"/><path d="M5.800 0.200V3.800H2z" fill="#adb4ba"/><rect x="0" y="8" width="15" height="7" fill="#4aa4c0"/><text x="1.500" y="14" font-family="Liberation Sans, sans-serif" font-weight="700" font-size="6.600" fill="#123e50" textLength="12" lengthAdjust="spacingAndGlyphs">CSS</text></svg>
<span class="t " style="left:132.78px;top:850.00px;color:#d1675a;letter-spacing:-0.087px;">Sidebar.module.css</span>
<svg style="left:61px;top:870px;" width="9" height="10" viewBox="0 0 9 10"><path d="M0.500 0.300v8.700L8 4.650z" fill="#a4a7a9"/></svg>
<svg style="left:79px;top:869px;" width="14" height="11" viewBox="0 0 14 11"><path d="M0 0h5.2l1.8 2H14v9H0z" fill="#87939a"/></svg>
<span class="t " style="left:96.78px;top:870.00px;color:#bbbbbb;letter-spacing:0.299px;">Hoc</span>
<svg style="left:61px;top:890px;" width="10" height="9" viewBox="0 0 10 9"><path d="M0.500 0h8.500L4.750 8z" fill="#a4a7a9"/></svg>
<svg style="left:79px;top:889px;" width="14" height="11" viewBox="0 0 14 11"><path d="M0 0h5.2l1.8 2H14v9H0z" fill="#87939a"/></svg>
<span class="t " style="left:96.78px;top:890.00px;color:#bbbbbb;letter-spacing:-0.350px;">Redux</span>
<svg style="left:97px;top:908px;" width="16" height="16" viewBox="0 0 16 16"><path d="M7 0H12V7H2V4.800H7z" fill="#adb4ba"/><path d="M5.800 0.200V3.800H2z" fill="#adb4ba"/><rect x="0" y="8" width="15" height="7" fill="#d9a343"/><text x="1.300" y="14" font-family="Liberation Sans, sans-serif" font-weight="700" font-size="6.600" fill="#553608" textLength="7.400" lengthAdjust="spacingAndGlyphs">JS</text></svg>
<span class="t " style="left:114.78px;top:910.00px;color:#629755;letter-spacing:0.141px;">Auth-reducer.js</span>
<svg style="left:97px;top:928px;" width="16" height="16" viewBox="0 0 16 16"><path d="M7 0H12V7H2V4.800H7z" fill="#adb4ba"/><path d="M5.800 0.200V3.800H2z" fill="#adb4ba"/><rect x="0" y="8" width="15" height="7" fill="#d9a343"/><text x="1.300" y="14" font-family="Liberation Sans, sans-serif" font-weight="700" font-size="6.600" fill="#553608" textLength="7.400" lengthAdjust="spacingAndGlyphs">JS</text></svg>
<span class="t " style="left:114.78px;top:930.00px;color:#d1675a;letter-spacing:-0.085px;">DialogsPage-reducer.js</span>
<svg style="left:97px;top:948px;" width="16" height="16" viewBox="0 0 16 16"><path d="M7 0H12V7H2V4.800H7z" fill="#adb4ba"/><path d="M5.800 0.200V3.800H2z" fill="#adb4ba"/><rect x="0" y="8" width="15" height="7" fill="#d9a343"/><text x="1.300" y="14" font-family="Liberation Sans, sans-serif" font-weight="700" font-size="6.600" fill="#553608" textLength="7.400" lengthAdjust="spacingAndGlyphs">JS</text></svg>
<span class="t " style="left:114.78px;top:950.00px;color:#629755;letter-spacing:0.128px;">Login-reducer.js</span>
<svg style="left:97px;top:968px;" width="16" height="16" viewBox="0 0 16 16"><path d="M7 0H12V7H2V4.800H7z" fill="#adb4ba"/><path d="M5.800 0.200V3.800H2z" fill="#adb4ba"/><rect x="0" y="8" width="15" height="7" fill="#d9a343"/><text x="1.300" y="14" font-family="Liberation Sans, sans-serif" font-weight="700" font-size="6.600" fill="#553608" textLength="7.400" lengthAdjust="spacingAndGlyphs">JS</text></svg>
<span class="t " style="left:114.78px;top:970.00px;color:#629755;letter-spacing:-0.086px;">News-reducer.js</span>
</div>
<div style="left:212px;top:86px;width:8px;height:599px;background:rgba(166,166,166,.28);"></div>
<div style="left:23px;top:958px;width:108px;height:8px;background:rgba(166,166,166,.28);"></div>
<div style="left:22px;top:967px;width:199px;height:1px;background:#323232;"></div>
<div style="left:221px;top:85px;width:1699px;height:859px;background:#2b2b2b;"></div>
<div style="left:221px;top:85px;width:104px;height:859px;background:#313335;"></div>
<div style="left:325px;top:85px;width:1px;height:859px;background:#585858;"></div>
<div class="clip" style="left:0;top:0;width:1920px;height:1080px;clip-path:inset(85px 0px 136px 221px);">
<div style="left:393px;top:85px;width:1px;height:859px;background:#3c3c3c;"></div>
<div style="left:449px;top:85px;width:1px;height:731px;background:#3c3c3c;"></div>
<div style="left:505px;top:85px;width:1px;height:655px;background:#3c3c3c;"></div>
<div style="left:561px;top:85px;width:1px;height:617px;background:#3c3c3c;"></div>
<div style="left:617px;top:85px;width:1px;height:503px;background:#3c3c3c;"></div>
<div style="left:673px;top:85px;width:1px;height:161px;background:#3c3c3c;"></div>
<div style="left:729px;top:85px;width:1px;height:123px;background:#3c3c3c;"></div>
<div style="left:673px;top:436px;width:1px;height:114px;background:#3c3c3c;"></div>
<span class="num" style="left:226.5px;top:58px;font-size:23.6px;letter-spacing:-0.162px;transform:scaleY(1.085)">139</span>
<span class="num" style="left:226.5px;top:96px;font-size:23.6px;letter-spacing:-0.162px;transform:scaleY(1.085)">140</span>
<span class="num" style="left:226.5px;top:134px;font-size:23.6px;letter-spacing:-0.162px;transform:scaleY(1.085)">141</span>
<span class="num" style="left:226.5px;top:172px;font-size:23.6px;letter-spacing:-0.162px;transform:scaleY(1.085)">142</span>
<span class="num" style="left:226.5px;top:210px;font-size:23.6px;letter-spacing:-0.162px;transform:scaleY(1.085)">143</span>
<span class="num" style="left:226.5px;top:248px;font-size:23.6px;letter-spacing:-0.162px;transform:scaleY(1.085)">144</span>
<span class="num" style="left:226.5px;top:286px;font-size:23.6px;letter-spacing:-0.162px;transform:scaleY(1.085)">145</span>
<span class="num" style="left:226.5px;top:324px;font-size:23.6px;letter-spacing:-0.162px;transform:scaleY(1.085)">146</span>
<span class="num" style="left:226.5px;top:362px;font-size:23.6px;letter-spacing:-0.162px;transform:scaleY(1.085)">147</span>
<span class="num" style="left:226.5px;top:400px;font-size:23.6px;letter-spacing:-0.162px;transform:scaleY(1.085)">148</span>
<span class="num" style="left:226.5px;top:438px;font-size:23.6px;letter-spacing:-0.162px;transform:scaleY(1.085)">149</span>
<span class="num" style="left:226.5px;top:476px;font-size:23.6px;letter-spacing:-0.162px;transform:scaleY(1.085)">150</span>
<span class="num" style="left:226.5px;top:514px;font-size:23.6px;letter-spacing:-0.162px;transform:scaleY(1.085)">151</span>
<span class="num" style="left:226.5px;top:552px;font-size:23.6px;letter-spacing:-0.162px;transform:scaleY(1.085)">152</span>
<span class="num" style="left:226.5px;top:590px;font-size:23.6px;letter-spacing:-0.162px;transform:scaleY(1.085)">153</span>
<span class="num" style="left:226.5px;top:628px;font-size:23.6px;letter-spacing:-0.162px;transform:scaleY(1.085)">154</span>
<span class="num" style="left:226.5px;top:666px;font-size:23.6px;letter-spacing:-0.162px;transform:scaleY(1.085)">155</span>
<span class="num" style="left:226.5px;top:704px;font-size:23.6px;letter-spacing:-0.162px;transform:scaleY(1.085)">156</span>
<span class="num" style="left:226.5px;top:742px;font-size:23.6px;letter-spacing:-0.162px;transform:scaleY(1.085)">157</span>
<span class="num" style="left:226.5px;top:780px;font-size:23.6px;letter-spacing:-0.162px;transform:scaleY(1.085)">158</span>
<span class="num" style="left:226.5px;top:818px;font-size:23.6px;letter-spacing:-0.162px;transform:scaleY(1.085)">159</span>
<span class="num" style="left:226.5px;top:856px;font-size:23.6px;letter-spacing:-0.162px;transform:scaleY(1.085)">160</span>
<span class="num" style="left:226.5px;top:894px;font-size:23.6px;letter-spacing:-0.162px;transform:scaleY(1.085)">161</span>
<span class="num" style="left:226.5px;top:932px;font-size:23.6px;letter-spacing:-0.162px;transform:scaleY(1.085)">162</span>
<div class="ln" style="left:335.5px;top:56px;font-size:23.6px;letter-spacing:-0.162px;transform:scaleY(1.085)">                                <span class="a">name</span><span class="g">=</span>{<span class="g">&#x27;confirmEmail&#x27;</span>}</div>
<div class="ln" style="left:335.5px;top:96px;font-size:23.6px;letter-spacing:-0.162px;transform:scaleY(1.085)">                                <span class="a">onChange</span><span class="g">=</span>{handleChange}</div>
<div class="ln" style="left:335.5px;top:134px;font-size:23.6px;letter-spacing:-0.162px;transform:scaleY(1.085)">                                <span class="a">onBlur</span><span class="g">=</span>{handleBlur}</div>
<div class="ln" style="left:335.5px;top:172px;font-size:23.6px;letter-spacing:-0.162px;transform:scaleY(1.085)">                                <span class="a">value</span><span class="g">=</span>{values.confirmEmail}</div>
<div class="ln" style="left:335.5px;top:210px;font-size:23.6px;letter-spacing:-0.162px;transform:scaleY(1.085)">                            <span class="k">/&gt;</span></div>
<div class="ln" style="left:335.5px;top:248px;font-size:23.6px;letter-spacing:-0.162px;transform:scaleY(1.085)">                        <span class="k">&lt;/p&gt;</span></div>
<div class="ln" style="left:335.5px;top:286px;font-size:23.6px;letter-spacing:-0.162px;transform:scaleY(1.085)">                        {touched.<span class="p">confirmEmail</span> &amp;&amp; errors.<span class="p">confirmEmail</span> &amp;&amp; <span class="k">&lt;p</span><span class="a"> className</span><span class="g">=</span>{<span class="g">&#x27;error&#x27;</span>}<span class="k">&gt;</span>{errors.<span class="p">confirmEmail</span>}<span class="k">&lt;/p&gt;</span>}</div>
<div class="ln" style="left:335.5px;top:400px;font-size:23.6px;letter-spacing:-0.162px;transform:scaleY(1.085)">                        <span class="k">&lt;button</span></div>
<div class="ln" style="left:335.5px;top:438px;font-size:23.6px;letter-spacing:-0.162px;transform:scaleY(1.085)">                            <span class="a">disabled</span><span class="g">=</span>{!isValid &amp;&amp; !dirty}</div>
<div class="ln" style="left:335.5px;top:476px;font-size:23.6px;letter-spacing:-0.162px;transform:scaleY(1.085)">                            <span class="a">onClick</span><span class="g">=</span>{<span class="f">onSubmit</span>=()=&gt;<span class="f">onSubmit</span>(values)}</div>
<div class="ln" style="left:335.5px;top:514px;font-size:23.6px;letter-spacing:-0.162px;transform:scaleY(1.085)">                            <span class="a">type</span><span class="g">=</span>{<span class="k">&lt;code&gt;</span>submit<span class="k">&lt;/code&gt;</span>}</div>
<div class="ln" style="left:335.5px;top:552px;font-size:23.6px;letter-spacing:-0.162px;transform:scaleY(1.085)">                        <span class="k">&gt;</span>Login<span class="k">&lt;/button &gt;</span></div>
<div class="ln" style="left:335.5px;top:666px;font-size:23.6px;letter-spacing:-0.162px;transform:scaleY(1.085)">                    <span class="k">&lt;/div&gt;</span></div>
<div class="ln" style="left:335.5px;top:704px;font-size:23.6px;letter-spacing:-0.162px;transform:scaleY(1.085)">                )}</div>
<div class="ln" style="left:335.5px;top:742px;font-size:23.6px;letter-spacing:-0.162px;transform:scaleY(1.085)">            <span class="k">&lt;/Formik&gt;</span></div>
<div class="ln" style="left:335.5px;top:780px;font-size:23.6px;letter-spacing:-0.162px;transform:scaleY(1.085)">            <span class="k">&lt;/div&gt;</span></div>
<div class="ln" style="left:335.5px;top:818px;font-size:23.6px;letter-spacing:-0.162px;transform:scaleY(1.085)">        <span class="k">&lt;/div&gt;</span></div>
<svg style="left:316px;top:256px;" width="19" height="20" viewBox="0 0 19 20"><path d="M1.5 6.2L9.5 0.7l8 5.5V18.5h-16z" fill="#2b2b2b" stroke="#606366" stroke-width="1"/><path d="M4.5 10.5h10" stroke="#606366" stroke-width="1"/></svg>
<svg style="left:316px;top:674px;" width="19" height="20" viewBox="0 0 19 20"><path d="M1.5 6.2L9.5 0.7l8 5.5V18.5h-16z" fill="#2b2b2b" stroke="#606366" stroke-width="1"/><path d="M4.5 10.5h10" stroke="#606366" stroke-width="1"/></svg>
<svg style="left:316px;top:750px;" width="19" height="20" viewBox="0 0 19 20"><path d="M1.5 6.2L9.5 0.7l8 5.5V18.5h-16z" fill="#2b2b2b" stroke="#606366" stroke-width="1"/><path d="M4.5 10.5h10" stroke="#606366" stroke-width="1"/></svg>
<svg style="left:316px;top:788px;" width="19" height="20" viewBox="0 0 19 20"><path d="M1.5 6.2L9.5 0.7l8 5.5V18.5h-16z" fill="#2b2b2b" stroke="#606366" stroke-width="1"/><path d="M4.5 10.5h10" stroke="#606366" stroke-width="1"/></svg>
<svg style="left:316px;top:826px;" width="19" height="20" viewBox="0 0 19 20"><path d="M1.5 6.2L9.5 0.7l8 5.5V18.5h-16z" fill="#2b2b2b" stroke="#606366" stroke-width="1"/><path d="M4.5 10.5h10" stroke="#606366" stroke-width="1"/></svg>
</div>
<div style="left:1909px;top:87px;width:10px;height:10px;background:#e0a526;"></div>
<div style="left:1907px;top:308px;width:13px;height:2px;background:rgba(224,165,56,.8);"></div>
<div style="left:1912px;top:775px;width:8px;height:109px;background:#585858;"></div>
<div style="left:336px;top:935px;width:1032px;height:8px;background:#505050;"></div>
<div style="left:221px;top:944px;width:1699px;height:23px;background:#313335;"></div>
<span class="t " style="left:334.28px;top:951.00px;color:#bbbbbb;letter-spacing:0.008px;">Registration()</span>
<svg style="left:417px;top:953px;" width="5" height="8" viewBox="0 0 5 8"><path d="M0.5 0.5L4 4 0.5 7.5" fill="none" stroke="#6b6e70" stroke-width="1"/></svg>
<span class="t " style="left:429.28px;top:951.00px;color:#bbbbbb;letter-spacing:0.175px;">onSubmit()</span>
<div style="left:22px;top:968px;width:1898px;height:28px;background:#3c3f41;"></div>
<span class="t " style="left:28.28px;top:976.00px;color:#bbbbbb;letter-spacing:0.150px;">Terminal:</span>
<span class="t " style="left:96.28px;top:976.00px;color:#bbbbbb;letter-spacing:0.151px;">Local</span>
<svg style="left:132.5px;top:977px;" width="8" height="8" viewBox="0 0 8 8"><path d="M0.5 0.5l7 7M7.5 0.5l-7 7" stroke="#6e7173" stroke-width="1" fill="none"/></svg>
<div style="left:85px;top:992px;width:66px;height:3px;background:#747a80;"></div>
<svg style="left:161px;top:976px;" width="11" height="11" viewBox="0 0 11 11"><path d="M5.5 0v11M0 5.5h11" stroke="#c4c6c7" stroke-width="1.8"/></svg>
<svg style="left:1875px;top:975px;" width="14" height="14" viewBox="0 0 14 14"><g fill="#aeb1b3"><circle cx="7" cy="7" r="4.9"/><rect x="5.6" y="0.2" width="2.8" height="3" transform="rotate(0 7 7)"/><rect x="5.6" y="0.2" width="2.8" height="3" transform="rotate(60 7 7)"/><rect x="5.6" y="0.2" width="2.8" height="3" transform="rotate(120 7 7)"/><rect x="5.6" y="0.2" width="2.8" height="3" transform="rotate(180 7 7)"/><rect x="5.6" y="0.2" width="2.8" height="3" transform="rotate(240 7 7)"/><rect x="5.6" y="0.2" width="2.8" height="3" transform="rotate(300 7 7)"/></g><circle cx="7" cy="7" r="2" fill="#3c3f41"/></svg>
<div style="left:1902px;top:980px;width:12px;height:2px;background:#aeb1b3;"></div>
<div style="left:0px;top:995px;width:1920px;height:1px;background:#35383a;"></div>
<div style="left:0px;top:996px;width:1920px;height:1px;background:#313436;"></div>
<div style="left:0px;top:997px;width:1920px;height:1px;background:#383b3d;"></div>
<div style="left:0px;top:998px;width:1920px;height:22px;background:#3c3f41;"></div>
<svg style="left:33px;top:1004px;" width="11" height="12" viewBox="0 0 11 12"><g fill="#aeb1b3"><rect x="0" y="0" width="1.900" height="11"/><rect x="1.900" y="6.200" width="6.400" height="1.800"/><rect x="6.300" y="3.800" width="2" height="4.200"/><path d="M4.200 4.300L7.300 0.200l3.100 4.100z"/></g></svg>
<span class="t " style="left:47.31px;top:1005.00px;font-size:11.5px;color:#bbbbbb;letter-spacing:0.149px;">9: Git</span>
<div style="left:48px;top:1015px;width:6.5px;height:1px;background:#bbbbbb;"></div>
<svg style="left:97px;top:1005px;" width="10" height="9" viewBox="0 0 10 9"><g fill="#aeb1b3"><rect x="0" y="0" width="1.800" height="2"/><rect x="3.200" y="0" width="6.800" height="2"/><rect x="0" y="3.200" width="1.800" height="2"/><rect x="3.200" y="3.200" width="6.800" height="2"/><rect x="0" y="6.300" width="1.800" height="2"/><rect x="3.200" y="6.300" width="6.800" height="2"/></g></svg>
<span class="t " style="left:111.31px;top:1005.00px;font-size:11.5px;color:#bbbbbb;letter-spacing:-0.216px;">6: TODO</span>
<div style="left:112px;top:1015px;width:6.5px;height:1px;background:#bbbbbb;"></div>
<div style="left:165px;top:998px;width:81px;height:21px;background:#2e3032;"></div>
<svg style="left:177px;top:1004px;" width="11" height="10" viewBox="0 0 11 10"><rect width="11" height="10" fill="#aeb1b3"/><path d="M2 2.5l2.5 2.3L2 7.1M5.5 7.6h3.5" fill="none" stroke="#2d2f30" stroke-width="1.2"/></svg>
<span class="t " style="left:192.71px;top:1005.00px;font-size:11.5px;color:#ffffff;letter-spacing:0.014px;">Terminal</span>
<svg style="left:1821px;top:1003px;" width="15" height="14" viewBox="0 0 15 14"><path d="M7 1.400a5.500 5.500 0 1 0 0 11H12.700V6.900A5.600 5.500 0 0 0 7 1.400z" fill="none" stroke="#aeb1b3" stroke-width="1.400"/></svg>
<span class="t " style="left:1838.61px;top:1005.00px;font-size:11.5px;color:#bbbbbb;letter-spacing:-0.113px;">Event Log</span>
<div style="left:0px;top:1019px;width:1920px;height:1px;background:#474a4c;"></div>
<div style="left:0px;top:1020px;width:1920px;height:20px;background:#3c3f41;"></div>
<svg style="left:6px;top:1024px;" width="13" height="12" viewBox="0 0 13 12"><rect x="2.6" y="0.6" width="9.8" height="8.8" fill="none" stroke="#aeb1b3" stroke-width="1.2"/><path d="M0.6 3v8.4h9.6" fill="none" stroke="#aeb1b3" stroke-width="1.2"/></svg>
<span class="t " style="left:1641.98px;top:1024.00px;color:#a8aaab;letter-spacing:-0.330px;">19:8</span>
<span class="t " style="left:1674.58px;top:1024.00px;color:#a8aaab;letter-spacing:-0.801px;">CRLF</span>
<span class="t " style="left:1713.58px;top:1024.00px;color:#a8aaab;letter-spacing:-0.172px;">UTF-8</span>
<span class="t " style="left:1756.98px;top:1024.00px;color:#a8aaab;letter-spacing:-0.286px;">4 spaces</span>
<svg style="left:1812px;top:1023px;" width="12" height="13" viewBox="0 0 12 13"><rect x="3.5" y="6" width="8" height="6.5" fill="#aeb1b3"/><path d="M1.2 7V3.8a2.4 2.4 0 0 1 4.8 0V6" fill="none" stroke="#aeb1b3" stroke-width="1.4"/></svg>
<svg style="left:1837px;top:1023px;" width="14" height="13" viewBox="0 0 14 13"><g fill="#aeb1b3"><path d="M3.5 4.5L4.3 0.6h5.4l.8 3.9z"/><rect x="0.5" y="4.5" width="13" height="1.4"/><path d="M3 7h8v2.2a4 4 0 0 1-8 0z"/><path d="M1.5 13c.3-1.8 1.6-2.6 3-2.8l2.5 1.4 2.5-1.4c1.4.2 2.7 1 3 2.8z"/></g><rect x="4.2" y="7.8" width="2.2" height="1.3" fill="#3c3f41"/><rect x="7.6" y="7.8" width="2.2" height="1.3" fill="#3c3f41"/></svg>
<svg style="left:1863px;top:1023px;" width="11" height="14" viewBox="0 0 11 14"><g fill="#aeb1b3"><circle cx="2.5" cy="2.4" r="2.2"/><circle cx="2.5" cy="11.4" r="2.2"/><circle cx="8.5" cy="4.4" r="2.2"/></g><path d="M2.5 2.4v9M8.5 4.4c0 3-6 2-6 5" fill="none" stroke="#aeb1b3" stroke-width="1.5"/></svg>
<span class="t " style="left:1878.58px;top:1024.00px;color:#a8aaab;letter-spacing:-0.091px;">Social</span>
<div style="left:0px;top:1040px;width:1920px;height:40px;background:#1f1f1f;"></div>
<svg style="left:11px;top:1047px;" width="26" height="26" viewBox="0 0 26 26"><g fill="#fff"><path d="M0.7 3.3L10.8 1.9V12H0.7z"/><path d="M12 1.7L25.2 0v12H12z"/><path d="M0.7 13.2H10.8V23.3L0.7 21.9z"/><path d="M12 13.2H25.2V25.2L12 23.5z"/></g></svg>
<svg style="left:64px;top:1043px;" width="34" height="34" viewBox="0 0 34 34"><circle cx="17" cy="17" r="16.2" fill="#44d32e"/><g stroke="#1d2a1a" stroke-width="2.6" stroke-linecap="round" fill="none"><path d="M16.7 17.2L9.6 14.4M16.7 17.2L22.6 11.4M16.7 17.2L19 24"/></g><g fill="#1d2a1a"><circle cx="9.4" cy="14.3" r="2.1"/><circle cx="22.8" cy="11.2" r="2.1"/><circle cx="19.1" cy="24.3" r="2.1"/><circle cx="16.7" cy="17.2" r="2.4"/></g></svg>
<svg style="left:124px;top:1042px;" width="38" height="36" viewBox="0 0 38 36"><defs><linearGradient id="pal" x1="0" y1="0" x2="1" y2="1"><stop offset="0" stop-color="#e4f0fa"/><stop offset="1" stop-color="#8fbfe3"/></linearGradient></defs><path d="M3 22c-2-8 5-15 15-15 9 0 15 5 15 12s-7 13-15 13c-4 0-5-2-4.500-4s-1-3.500-3.500-3.500S4 26 3 22z" fill="url(#pal)" stroke="#6d8ea8" stroke-width=".6"/><circle cx="7.700" cy="19.800" r="2.600" fill="#e0463c"/><circle cx="12.600" cy="14.400" r="2.600" fill="#6dbb3e"/><circle cx="19.300" cy="11.800" r="2.700" fill="#f0b030"/><circle cx="15.600" cy="21.300" r="2" fill="#1f3340"/><path d="M18.600 33L27.600 10.500l2.200.9L20.300 33.800z" fill="#e8902c" stroke="#b86a1c" stroke-width=".4"/><path d="M27.400 10.800L28.500 3l5 2.300-3.600 6.300z" fill="#e8c89a"/></svg>
<svg style="left:186px;top:1043px;" width="34" height="34" viewBox="0 0 34 34"><g fill="none" stroke-linecap="round" stroke-width="5"><path d="M24 6.500L4 22.500" stroke="#1c95ea"/><path d="M24 27.500L4 11.500" stroke="#0f7ed2"/></g><path d="M24.500 0.800L33 5v24l-8.500 4.200z" fill="#2aa9f3"/><path d="M24.500 0.800L20 5.500 24.500 9zM24.500 33.200L20 28.500 24.500 25z" fill="#1c95ea"/></svg>
<svg style="left:247px;top:1043px;" width="34" height="34" viewBox="0 0 34 34"><defs><clipPath id="utc"><circle cx="17" cy="17" r="16.200"/></clipPath></defs><circle cx="17" cy="17" r="16.200" fill="#78b947"/><g clip-path="url(#utc)"><text x="18.500" y="24.500" font-family="Liberation Sans, sans-serif" font-weight="700" font-size="40" fill="#fff" text-anchor="middle" transform="rotate(-19 17 17)">µ</text></g></svg>
<svg style="left:309px;top:1047px;" width="30" height="25" viewBox="0 0 30 25"><rect x=".5" y=".5" width="29" height="24" fill="#000" stroke="#9a9a9a"/><rect x="1" y="1" width="28" height="2.600" fill="#b4b4b4"/><text x="4.200" y="12" font-family="Liberation Mono, monospace" font-weight="700" font-size="8" fill="#fff" textLength="22" lengthAdjust="spacingAndGlyphs">C:\_</text></svg>
<div style="left:357px;top:1041px;width:56px;height:35px;border:1px solid #5e5e5e;background:#484848"></div>
<div style="left:418px;top:1041px;width:56px;height:35px;border:1px solid #5e5e5e;background:#484848"></div>
<div style="left:479px;top:1041px;width:56px;height:35px;border:1px solid #dcdcdc;background:linear-gradient(#828282,#6e6e6e)"></div>
<div style="left:540px;top:1041px;width:56px;height:35px;border:1px solid #5e5e5e;background:#484848"></div>
<svg style="left:372px;top:1048px;" width="29" height="24" viewBox="0 0 29 24"><path d="M0 2.500C0 1 1 0 2.500 0H9l3 3h15.500c1 0 1.500.5 1.500 1.500V22c0 1-.5 1.500-1.500 1.500h-26C.5 23.500 0 23 0 22z" fill="#f5c84c"/><path d="M0 6h29v16c0 1-.5 1.500-1.500 1.500h-26C.5 23.500 0 23 0 22z" fill="#ffe08a"/><path d="M5 23.500V14.500c0-1 .5-1.500 1.500-1.500h16c1 0 1.500.5 1.500 1.500v9h-5.500v-5.500h-8v5.500z" fill="#34a6f0"/></svg>
<svg style="left:429px;top:1043px;" width="36" height="34" viewBox="0 0 36 34"><circle cx="17.800" cy="17" r="15.300" fill="none" stroke="#e4285c" stroke-width="2.200"/><ellipse cx="19.200" cy="17" rx="7.300" ry="13.600" fill="none" stroke="#e4285c" stroke-width="2.200"/></svg>
<svg style="left:490px;top:1042px;" width="36" height="36" viewBox="0 0 36 36"><path d="M2 4l13-2.500 3 5.500-4 22-7 1.500z" fill="#12c4dc"/><path d="M17 6l8-4.500 6.500 4L28 13z" fill="#f4ee4c"/><path d="M30 8l4.500 13L22 34 6 30l10-20z" fill="#1690e8"/><path d="M15 2l9 1-6 8z" fill="#26d4c4"/><rect x="8" y="7.500" width="20" height="20" fill="#000"/><text x="9.600" y="18.400" font-family="Liberation Sans, sans-serif" font-weight="700" font-size="10.300" fill="#fff" textLength="16.700" lengthAdjust="spacingAndGlyphs">WS</text><rect x="10.600" y="24" width="7.200" height="1.700" fill="#fff"/></svg>
<svg style="left:553px;top:1047px;" width="30" height="30" viewBox="0 0 30 30"><rect x="5" y="3" width="23.500" height="24" fill="#6fa4d4"/><rect x="3.500" y="2.500" width="22.500" height="25" fill="#9cc6ec"/><rect x="1.500" y="2" width="21.500" height="26" fill="#7db2e2" stroke="#5a90c4" stroke-width=".5"/><circle cx="12.700" cy="14" r="7.600" fill="#f08a24"/><circle cx="12.700" cy="14" r="6" fill="#f4741c"/><path d="M10 9.300l7.500 4.700L10 18.700z" fill="#fff"/></svg>
<svg style="left:1694px;top:1058px;" width="9" height="5" viewBox="0 0 9 5"><path d="M0 4.500L4.500 0 9 4.500z" fill="#fff"/></svg>
<svg style="left:1715px;top:1054px;" width="17" height="13" viewBox="0 0 17 13"><rect x="3.500" y=".6" width="12.500" height="8.400" fill="none" stroke="#fff" stroke-width="1.100"/><rect x=".6" y=".6" width="3.800" height="3" fill="#1f1f1f" stroke="#fff" stroke-width="1"/><path d="M2.500 3.600v8.800h7M9.800 9v3.400M6.500 12.400h6.500" fill="none" stroke="#fff" stroke-width="1.100"/></svg>
<svg style="left:1738px;top:1054px;" width="18" height="13" viewBox="0 0 18 13"><path d="M.6 4.200h2.600L6.500.8v11.400L3.200 8.800H.6z" fill="none" stroke="#fff" stroke-width="1.100"/><path d="M8.600 4.500a3 3 0 0 1 0 4" fill="none" stroke="#fff" stroke-width="1"/><path d="M10.800 2.800a5.500 5.500 0 0 1 0 7.400" fill="none" stroke="#aaa" stroke-width="1"/><path d="M13 1.200a8 8 0 0 1 0 10.600" fill="none" stroke="#777" stroke-width="1"/></svg>
<span class="t " style="left:1764.88px;top:1053.50px;color:#fff;letter-spacing:-0.892px;">ENG</span>
<span class="t " style="left:1814.28px;top:1045.00px;color:#fff;letter-spacing:-0.598px;">16:06</span>
<span class="t " style="left:1800.28px;top:1063.00px;color:#fff;letter-spacing:-0.587px;">21.03.2021</span>
<svg style="left:1873px;top:1052px;" width="17" height="16" viewBox="0 0 17 16"><path d="M.6.600h15.800v11.400h-5.500L8.500 14.800 6.100 12H.6z" fill="none" stroke="#fff" stroke-width="1.200"/></svg>
</div>
</body></html>
